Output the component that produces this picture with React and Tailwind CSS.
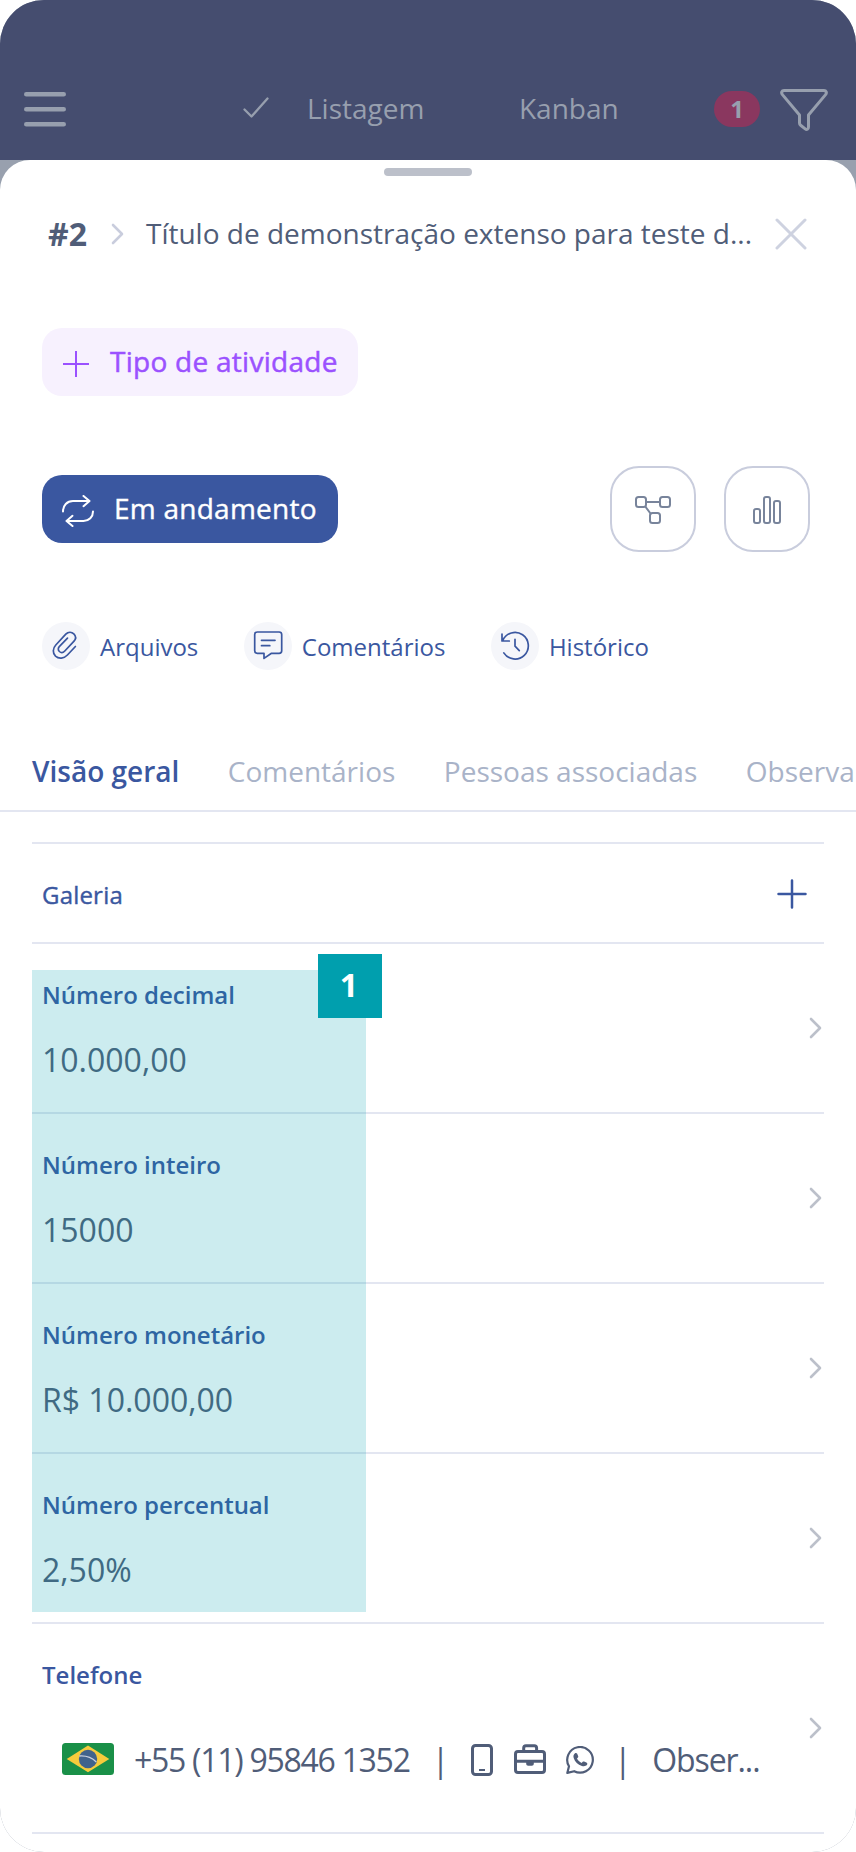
import React, { useState } from 'react';

const MenuIcon = () => (
  <svg width="42" height="36" viewBox="0 0 42 36" fill="none" stroke="currentColor" strokeWidth="4.6" strokeLinecap="round">
    <path d="M2.3 3.3h37.4M2.3 18.3h37.4M2.3 33.3h37.4" />
  </svg>
);

const CheckIcon = () => (
  <svg width="26" height="22" viewBox="0 0 26 22" fill="none" stroke="currentColor" strokeWidth="2.3" strokeLinecap="round" strokeLinejoin="round">
    <path d="M1.5 12.5 8.5 19.5 24.5 1.5" />
  </svg>
);

const FunnelIcon = () => (
  <svg width="48" height="42" viewBox="0 0 48 42" fill="none" stroke="currentColor" strokeWidth="3" strokeLinejoin="round">
    <path d="M4 1.5h40c2.2 0 3.1 2.4 1.6 4.1L28.5 26v12.1c0 2-1.8 3-3.3 1.8l-4.6-3.6c-.7-.5-1.1-1.3-1.1-2.2V26L2.4 5.6C.9 3.9 1.8 1.5 4 1.5Z" />
  </svg>
);

const ChevronIcon = () => (
  <svg width="13" height="22" viewBox="0 0 13 22" fill="none" stroke="currentColor" strokeWidth="2.6" strokeLinecap="round" strokeLinejoin="round">
    <path d="M2 2l9 9-9 9" />
  </svg>
);

const CloseIcon = () => (
  <svg width="32" height="32" viewBox="0 0 32 32" fill="none" stroke="currentColor" strokeWidth="3" strokeLinecap="round">
    <path d="M2 2l28 28M30 2 2 30" />
  </svg>
);

const SyncIcon = () => (
  <svg width="32" height="32" viewBox="0 0 32 32" fill="none" stroke="currentColor" strokeWidth="2" strokeLinecap="round" strokeLinejoin="round">
    <path d="M1 16.5C1 10.5 5 6 11 6h16M21.5 1l6 5-6 5.2" />
    <path d="M31 16.5c0 5.5-4 9.5-9.5 9.5H5M10.5 20.8l-6 5.2 6 5" />
  </svg>
);

const FlowIcon = () => (
  <svg width="36" height="28" viewBox="0 0 36 28" fill="none" stroke="currentColor" strokeWidth="2">
    <rect x="1" y="1" width="10" height="10" rx="2.5" />
    <rect x="25" y="1" width="10" height="10" rx="2.5" />
    <rect x="15" y="17" width="10" height="10" rx="2.5" />
    <path d="M11 6h14M10.3 10.5l5.2 7" />
  </svg>
);

const BarsIcon = () => (
  <svg width="28" height="28" viewBox="0 0 28 28" fill="none" stroke="currentColor" strokeWidth="2">
    <rect x="1" y="13" width="6" height="14" rx="2" />
    <rect x="11" y="1" width="6" height="26" rx="2" />
    <rect x="21" y="5" width="6" height="22" rx="2" />
  </svg>
);

const ClipIcon = () => (
  <svg width="48" height="48" viewBox="0 0 48 48" fill="none" stroke="currentColor" strokeWidth="1.7" strokeLinecap="round" strokeLinejoin="round">
    <path d="M33.4 24.5 25.4 33c-3.5 3.7-8.6 4.2-11.9 1.1-3-3-2.9-7.7.3-11.1l10-10.8c2.4-2.5 5.8-2.5 8-.4 2.2 2.2 2.2 5.2 0 7.5L22.8 29c-1.6 1.7-3.9 1.9-5.4.5s-1.5-3.5.1-5.2l8-8.1" />
  </svg>
);

const CommentIcon = () => (
  <svg width="48" height="48" viewBox="0 0 48 48" fill="none" stroke="currentColor" strokeWidth="1.7" strokeLinecap="round" strokeLinejoin="round">
    <path d="M13.3 10h21.8a2.6 2.6 0 0 1 2.6 2.6v16.1a2.6 2.6 0 0 1-2.6 2.6h-7.6L20 36.4v-5.1h-6.7a2.6 2.6 0 0 1-2.6-2.6V12.6a2.6 2.6 0 0 1 2.6-2.6Z" />
    <path d="M17.5 18.3H31M17.5 23.7h8.3" />
  </svg>
);

const HistoryIcon = () => (
  <svg width="48" height="48" viewBox="0 0 48 48" fill="none" stroke="currentColor" strokeWidth="1.7" strokeLinecap="round" strokeLinejoin="round">
    <path d="M11 12v7h7.3M11.8 18.5a13.3 13.3 0 1 1 1 12.4" />
    <path d="M24 17.3v6.9l4.3 4.4" />
  </svg>
);

const FlagIcon = () => (
  <svg width="52" height="32" viewBox="0 0 52 32">
    <rect width="52" height="32" rx="3.5" fill="#1a9048" />
    <path d="M26 2.5 47.3 16 26 29.3 4.7 16Z" fill="#f6cb3c" />
    <circle cx="26" cy="16" r="9.2" fill="#40638c" />
    <path d="M17.3 13c6.5-.5 12.5 1.5 17 6" fill="none" stroke="#c9d0de" strokeWidth="1.3" />
  </svg>
);

const PhoneIcon = () => (
  <svg width="22" height="32" viewBox="0 0 22 32" fill="none" stroke="currentColor" strokeWidth="3">
    <rect x="1.5" y="1.5" width="19" height="29" rx="3" />
    <path d="M8 26h6" strokeWidth="2" />
  </svg>
);

const BriefcaseIcon = () => (
  <svg width="32" height="30" viewBox="0 0 32 30" fill="none" stroke="currentColor" strokeWidth="3">
    <rect x="1.5" y="7.5" width="29" height="21" rx="2.5" />
    <path d="M9.7 7.5V4c0-1.5.8-2.3 2.3-2.3h8.3c1.500 0 2.300.8 2.300 2.300v3.500M1.500 17.300h29" />
    <path d="M12.2 17.500h7.600v2.300c0 1.200-.8 2-2 2h-3.600c-1.200 0-2-.8-2-2Z" fill="currentColor" stroke="none" />
  </svg>
);

const WhatsappIcon = () => (
  <svg width="28" height="28" viewBox="0 0 28 28" fill="none" stroke="currentColor" strokeWidth="2.2" strokeLinejoin="round">
    <path d="M3 20.300A12.800 12.800 0 1 1 8.200 25.200L1.300 26.900Z" />
    <path
      d="M9 7.200c.8-.6 1.800-.3 2.200.6l1 2.400c.2.500.1 1-.3 1.400l-.9 1c1 2 2.500 3.400 4.600 4.300l1.100-1.100c.4-.4.900-.5 1.400-.3l2.300 1c1 .5 1.200 1.500.6 2.300-1.200 1.500-3.100 1.800-5.100 1.100-4-1.300-7-4.300-8.200-8-.6-1.900-.1-3.700 1.300-4.700Z"
      fill="currentColor"
      stroke="none"
    />
  </svg>
);

const shortcuts = [
  { name: 'Arquivos', icon: ClipIcon },
  { name: 'Comentários', icon: CommentIcon },
  { name: 'Histórico', icon: HistoryIcon },
];

const tabs = ['Visão geral', 'Comentários', 'Pessoas associadas', 'Observa'];

const fields = [
  { label: 'Número decimal', value: '10.000,00' },
  { label: 'Número inteiro', value: '15000' },
  { label: 'Número monetário', value: 'R$ 10.000,00' },
  { label: 'Número percentual', value: '2,50%' },
];

const App = () => {
  const [activeTab, setActiveTab] = useState('Visão geral');

  return (
    <div className="w-[856px] h-[1852px] rounded-[44px] overflow-hidden bg-[#98a0ae] font-['Open_Sans',sans-serif]">
      {/* Top bar */}
      <header className="h-[160px] bg-[#454d6f] text-[#979fae] pt-[58px] pl-6 pr-7">
        <div className="flex items-center h-[102px] text-[28px] leading-[38px]">
          <MenuIcon />
          <div className="flex items-center ml-[177px] -mt-0.5">
            <CheckIcon />
            <span className="ml-[38px]">Listagem</span>
          </div>
          <span className="ml-[94.5px] -mt-0.5">Kanban</span>
          <span className="ml-auto w-[46px] h-9 rounded-full bg-[#8a375f] flex items-center justify-center text-2xl font-bold">1</span>
          <span className="ml-5 mt-0.5"><FunnelIcon /></span>
        </div>
      </header>

      {/* Sheet */}
      <main className="h-[1692px] bg-white rounded-t-[30px] pt-2">
        <div className="w-[88px] h-2 rounded-full bg-[#bcc0ca] mx-auto" />

        <div className="flex items-center h-16 mt-[26px] pl-12 pr-[49px] text-[#505d78]">
          <span className="text-[32px] leading-[44px] font-bold">#2</span>
          <span className="ml-[24px] text-[#c9cddd]"><ChevronIcon /></span>
          <h1 className="ml-[22px] -mt-0.5 text-[28px] leading-[38px] whitespace-nowrap">
            Título de demonstração extenso para teste d...
          </h1>
          <button className="ml-auto text-[#ced2e0]"><CloseIcon /></button>
        </div>

        <div className="pl-[42px] pr-[46px] mt-[62px]">
          <button className="flex items-center w-[316px] h-[68px] pl-[21px] rounded-[20px] bg-[#f7f1fe] text-[#9b51ff]">
            <svg width="26" height="26" viewBox="0 0 26 26" stroke="currentColor" strokeWidth="2" className="mt-1">
              <path d="M13 0v26M0 13h26" />
            </svg>
            <span className="ml-[21px] text-[28px] leading-[38px] tracking-[0.27px] [-webkit-text-stroke:0.5px_currentColor] -mt-0.5">Tipo de atividade</span>
          </button>

          <div className="flex items-center justify-between mt-[70px]">
            <button className="flex items-center w-[296px] h-[68px] pl-5 rounded-[20px] bg-[#3a57a0] text-white">
              <span className="mt-1"><SyncIcon /></span>
              <span className="ml-5 text-[28px] leading-[38px] tracking-[0.25px] [-webkit-text-stroke:0.4px_currentColor] -mt-0.5">Em andamento</span>
            </button>
            <div className="flex gap-7 text-[#78849b]">
              <button className="w-[86px] h-[86px] pt-0.5 rounded-[29px] border-2 border-[#c9cddd] flex items-center justify-center">
                <FlowIcon />
              </button>
              <button className="w-[86px] h-[86px] pt-0.5 rounded-[29px] border-2 border-[#c9cddd] flex items-center justify-center">
                <BarsIcon />
              </button>
            </div>
          </div>

          <div className="flex gap-[45.5px] mt-[70px] text-[#3a57a0]">
            {shortcuts.map((item) => (
              <a key={item.name} className="flex items-center gap-2.5 text-2xl leading-8">
                <span className="w-12 h-12 rounded-full bg-[#f5f6fa]">
                  <item.icon />
                </span>
                <span className="mt-0.5">{item.name}</span>
              </a>
            ))}
          </div>
        </div>

        {/* Tabs */}
        <nav className="flex gap-[48.5px] h-[142px] pt-[82px] pl-8 border-b-2 border-[#e3e6f1] text-[28px] leading-[38px] whitespace-nowrap">
          {tabs.map((tab) => (
            <button
              key={tab}
              onClick={() => setActiveTab(tab)}
              className={`h-[38px] shrink-0 ${activeTab === tab ? 'font-semibold text-[#3a57a0]' : 'text-[#a9b3c8]'}`}
            >
              {tab}
            </button>
          ))}
        </nav>

        <section className="relative mx-8 mt-[30px] border-t-2 border-[#e3e6f1]">
          <div className="flex items-center justify-between h-[100px] pl-2.5 pr-[17px] border-b-2 border-[#e3e6f1] text-[#3a57a0]">
            <span className="text-2xl leading-8 tracking-[0.2px] [-webkit-text-stroke:0.4px_currentColor] mt-1">Galeria</span>
            <svg width="30" height="30" viewBox="0 0 30 30" stroke="currentColor" strokeWidth="2.5" strokeLinecap="round" className="mt-0.5">
              <path d="M15 1.5v27M1.5 15h27" />
            </svg>
          </div>

          {fields.map((field) => (
            <div key={field.label} className="flex justify-between h-[170px] pl-2.5 pr-0.5 border-b-2 border-[#e3e6f1]">
              <div className="pt-[35px]">
                <p className="text-2xl leading-8 font-semibold text-[#3a57a0]">{field.label}</p>
                <p className="mt-[27px] text-[32px] leading-[44px] text-[#505d78]">{field.value}</p>
              </div>
              <span className="self-center text-[#bcc0ca]"><ChevronIcon /></span>
            </div>
          ))}

          <div className="flex justify-between h-[210px] pl-2.5 pr-0.5 border-b-2 border-[#e3e6f1]">
            <div className="pt-[35px]">
              <p className="text-2xl leading-8 font-semibold text-[#3a57a0]">Telefone</p>
              <div className="flex items-center mt-[45px] pl-5 text-[32px] leading-[44px] tracking-[-1.28px] text-[#505d78]">
                <FlagIcon />
                <span className="ml-5 mt-0.5">+55 (11) 95846 1352</span>
                <span className="ml-[22px] mt-0.5">|</span>
                <span className="ml-[23px] mt-px"><PhoneIcon /></span>
                <span className="ml-[21px]"><BriefcaseIcon /></span>
                <span className="ml-5 mt-0.5"><WhatsappIcon /></span>
                <span className="ml-5 mt-0.5">|</span>
                <span className="ml-[22px] mt-0.5 tracking-[-1.1px]">Obser...</span>
              </div>
            </div>
            <span className="self-center text-[#bcc0ca]"><ChevronIcon /></span>
          </div>

          {/* Highlighted values */}
          <div className="absolute left-0 top-[126px] w-[334px] h-[642px] bg-[#009fae]/20" />
          <div className="absolute left-[286px] top-[110px] w-16 h-16 pr-0.5 pb-0.5 bg-[#009fae] flex items-center justify-center text-white text-[32px] leading-[44px] font-bold">
            1
          </div>
        </section>
      </main>
    </div>
  );
};

export default App;
